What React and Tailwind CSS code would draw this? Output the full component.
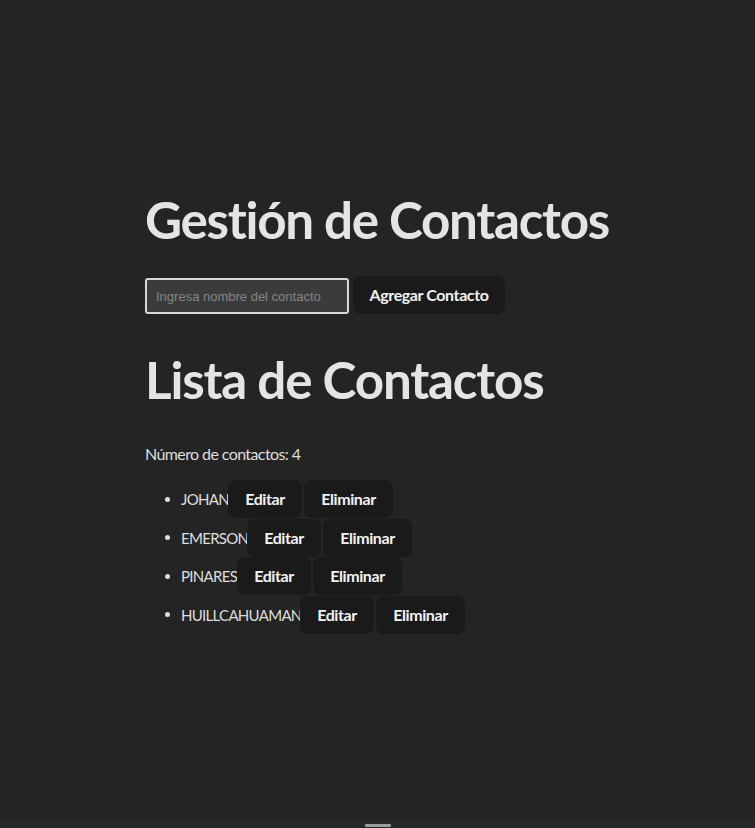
import React, { useState } from "react";

const initialContacts = [
  { name: "JOHAN", w: "w-[47px]" },
  { name: "EMERSON", w: "w-[66px]" },
  { name: "PINARES", w: "w-[56px]" },
  { name: "HUILLCAHUAMAN", w: "w-[119px]" },
];

const font = { fontFamily: "Lato, 'Noto Sans', sans-serif" };

const ActionButton = ({ children, width }) => (
  <button
    className={`h-[38px] ${width} shrink-0 rounded-lg bg-[#1a1a1a] text-[16px] font-bold tracking-[-0.4px] text-[#f2f2f2] flex items-center justify-center`}
  >
    {children}
  </button>
);

export default function App() {
  const [contacts] = useState(initialContacts);
  const [name, setName] = useState("");

  return (
    <div
      className="h-[828px] flex flex-col bg-[#242424] text-[#dedede] overflow-hidden [font-variant-ligatures:none]"
      style={font}
    >
      <main className="flex-1 flex justify-center">
        <div className="w-[465px] pt-[191px]">
          <h1 className="text-[51.2px] leading-[56px] font-bold tracking-[-1.3px] text-[#e4e4e4] whitespace-nowrap">
            Gestión de Contactos
          </h1>

          <div className="mt-[29px] flex items-end gap-[4px] h-[38px]">
            <input
              type="text"
              value={name}
              onChange={(e) => setName(e.target.value)}
              placeholder="Ingresa nombre del contacto"
              className="w-[204px] h-[36px] rounded-[3px] border-2 border-[#d6d6d6] bg-[#3b3b3b] px-[9px] text-[13px] text-white placeholder:text-[#858585] outline-none"
              style={{ fontFamily: "'Liberation Sans', Arial, sans-serif" }}
            />
            <ActionButton width="w-[152px]">Agregar Contacto</ActionButton>
          </div>

          <h2 className="mt-[37px] text-[51.2px] leading-[56px] font-bold tracking-[-1.2px] text-[#e4e4e4] whitespace-nowrap">
            Lista de Contactos
          </h2>

          <p className="mt-[35px] text-[16px] leading-[24px] tracking-[-0.6px]">
            Número de contactos: {contacts.length}
          </p>

          <ul className="mt-[14px]">
            {contacts.map((c) => (
              <li key={c.name} className="h-[38.5px] flex items-center">
                <span className="w-[5px] h-[5px] rounded-full bg-[#dedede] ml-[20px] mr-[11px]" />
                <span className={`${c.w} text-[15px] tracking-[-0.7px] whitespace-nowrap`}>
                  {c.name}
                </span>
                <div className="flex gap-[2px]">
                  <ActionButton width="w-[74px]">Editar</ActionButton>
                  <ActionButton width="w-[89px]">Eliminar</ActionButton>
                </div>
              </li>
            ))}
          </ul>
        </div>
      </main>
      <div className="h-[10px] bg-[#27282a] flex justify-center items-end pb-[1px]">
        <div className="w-[26px] h-[3px] bg-[#9c9c9c] rounded-[1px]" />
      </div>
    </div>
  );
}
